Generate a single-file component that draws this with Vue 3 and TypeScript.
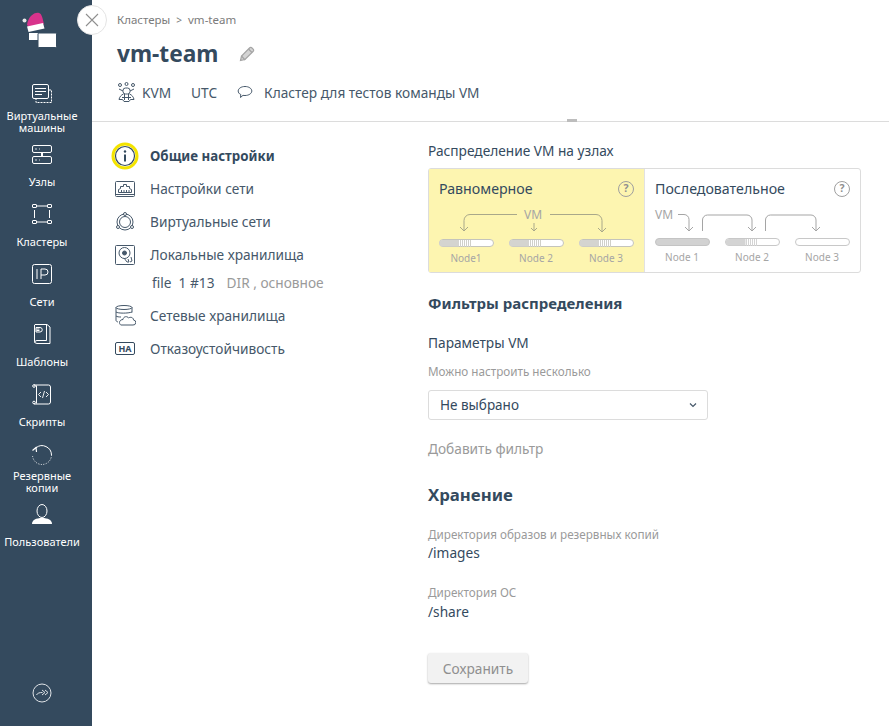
<script setup lang="ts">
const sideItems = [
  { id: 'vm', label: ['Виртуальные', 'машины'] },
  { id: 'nodes', label: ['Узлы'] },
  { id: 'clusters', label: ['Кластеры'] },
  { id: 'ip', label: ['Сети'] },
  { id: 'tpl', label: ['Шаблоны'] },
  { id: 'script', label: ['Скрипты'] },
  { id: 'backup', label: ['Резервные', 'копии'] },
  { id: 'users', label: ['Пользователи'] },
]
const evenBars = [439, 509, 579]
const hatch = [0, 2, 4, 6, 8, 10]
</script>

<template>
  <div class="page">
    <aside class="side">
      <div class="logo">
        <svg width="40" height="50" viewBox="20 10 40 50">
          <path d="M27 25 C28 17 34 12 39 13 C42 13.500 43 20 44 24 L30 28 Z" fill="#d8338c" />
          <circle cx="24.500" cy="20.500" r="2" fill="#e8e8e8" />
          <path d="M27 26.500 L43 23 L44.500 28.500 L28.500 32 Z" fill="#fff" />
          <rect x="29" y="33" width="14" height="7" fill="#fff" />
          <rect x="38" y="33" width="18.500" height="14.500" rx="1" fill="#fff" stroke="#344a5e" />
        </svg>
      </div>
      <nav class="side-nav">
        <a v-for="item in sideItems" :key="item.id" class="side-item">
          <span class="side-icon">
            <svg v-if="item.id === 'vm'" width="24" height="24" viewBox="30 82 24 24" fill="none" stroke="#fff" stroke-width="1">
              <rect x="32.500" y="84.500" width="16" height="14" rx="1.500" />
              <path d="M35 88.500h11M35 91.500h11M35 94.500h7" />
              <path d="M49 90h2.500v12.500H36V99" stroke-dasharray="2 1" />
            </svg>
            <svg v-else-if="item.id === 'nodes'" width="24" height="24" viewBox="30 142 24 24" fill="none" stroke="#fff" stroke-width="1">
              <rect x="32.500" y="145.500" width="19" height="7" rx="1.500" />
              <rect x="32.500" y="156.500" width="19" height="7" rx="1.500" />
              <path d="M42 152.500v4" stroke-width="2" />
              <path d="M35 149h2M39 149h1M35 160h2M39 160h1" stroke="#cfd6dc" />
            </svg>
            <svg v-else-if="item.id === 'clusters'" width="24" height="24" viewBox="30 202 24 24" fill="none" stroke="#fff" stroke-width="1">
              <rect x="32.500" y="204.500" width="4" height="3" rx=".5" />
              <rect x="47.500" y="204.500" width="4" height="3" rx=".5" />
              <rect x="32.500" y="220.500" width="4" height="3" rx=".5" />
              <rect x="47.500" y="220.500" width="4" height="3" rx=".5" />
              <path d="M37 206h10M37 222h10M34.500 210v8M49.500 210v8" />
            </svg>
            <svg v-else-if="item.id === 'ip'" width="24" height="24" viewBox="30 262 24 24" fill="none" stroke="#fff" stroke-width="1">
              <rect x="32.500" y="264.500" width="19" height="19" rx="2" />
              <path d="M37 269v10" />
              <path d="M41 279v-10h4a2.800 2.800 0 0 1 0 6h-4" />
            </svg>
            <svg v-else-if="item.id === 'tpl'" width="24" height="24" viewBox="30 322 24 24" fill="none" stroke="#fff" stroke-width="1">
              <path d="M35 324.500h12l3 2.500v16.500H37a2.500 2.500 0 0 1-2.500-2.500v-16z" />
              <path d="M46.500 324.500v16H37a2.500 2.500 0 0 0-2.500 2" />
              <path d="M36 327.500h4a2 2 0 0 1 0 4.500h-4z" />
              <path d="M36.500 329h3M36.500 330.500h3" />
            </svg>
            <svg v-else-if="item.id === 'script'" width="24" height="24" viewBox="30 382 24 24" fill="none" stroke="#fff" stroke-width="1">
              <path d="M34 385h14.500a2 2 0 0 1 2 2v15a2 2 0 0 1-2 2H34" />
              <path d="M36.500 385.500v18" />
              <circle cx="34" cy="386" r="1.300" />
              <circle cx="34" cy="402.500" r="1.300" />
              <path d="M41 392l-2.500 2.500 2.500 2.500M46 392l2.500 2.500-2.500 2.500M44.500 391l-2 7" stroke-width=".9" />
            </svg>
            <svg v-else-if="item.id === 'backup'" width="24" height="24" viewBox="30 442 24 24" fill="none" stroke="#fff" stroke-width="1">
              <path d="M36 447.800a9.500 9.500 0 0 1 15.500 7.200" />
              <path d="M51.500 455a9.500 9.500 0 0 1-19 0" stroke-dasharray="1 1.500" />
              <path d="M32.500 450.500l3.500-3 .5 4.500" stroke-width="1.200" />
            </svg>
            <svg v-else width="24" height="24" viewBox="30 502 24 24">
              <ellipse cx="42" cy="511" rx="5" ry="6.500" fill="none" stroke="#fff" />
              <path d="M32 524c0-4 4-6 10-6s10 2 10 6z" fill="#fff" />
            </svg>
          </span>
          <span class="side-label"><span v-for="l in item.label" :key="l">{{ l }}</span></span>
        </a>
      </nav>
      <div class="side-foot">
        <svg width="20" height="20" viewBox="0 0 20 20" fill="none" stroke="#dfe3e7" stroke-width="1">
          <circle cx="10" cy="10" r="9" />
          <path d="M4.500 12c1-2 3-2.500 6-2.500" />
          <path d="M10 7l3 2.500-3 2.500M13 7l3 2.500-3 2.500" />
        </svg>
      </div>
    </aside>

    <button class="close" aria-label="Закрыть">
      <svg width="14" height="14" viewBox="0 0 14 14" stroke="#8f8f8f" stroke-width="1.100" fill="none">
        <path d="M1 1l12 12M13 1L1 13" />
      </svg>
    </button>

    <main class="main">
      <header class="head">
        <div class="crumbs">Кластеры<span class="gt">&gt;</span>vm-team</div>
        <div class="title-row">
          <h1>vm-team</h1>
          <svg width="16" height="16" viewBox="0 0 16 16" fill="none" stroke="#a5a5a5" stroke-width="1.200">
            <path d="M1.500 14.500l1-4.500 8-8a1.500 1.500 0 0 1 2.500 0l1 1a1.500 1.500 0 0 1 0 2.500l-8 8z" fill="#d4d4d4" />
            <path d="M9.500 3l3.500 3.500M2.500 10l3.500 4" />
          </svg>
        </div>
        <div class="meta">
          <svg class="kvm" width="19" height="20" viewBox="0 0 19 20" fill="none" stroke="#46586a" stroke-width="1">
            <circle cx="3" cy="3" r="1.500" /><circle cx="9.500" cy="2" r="1.500" /><circle cx="16" cy="3" r="1.500" />
            <rect x="6" y="6" width="7" height="6" rx="2.500" />
            <path d="M6 9L2 7M13 9l4-2M6.500 12C4 13 2.500 15 2 17.500h3.500L7 19.500h5l1.500-2H17c-.5-2.500-2-4.500-4.500-5.500" />
            <path d="M7.500 12v6M11.500 12v6M5 15.500h9" />
          </svg>
          <span class="kv">KVM</span>
          <span class="utc">UTC</span>
          <svg class="bubble" width="16" height="14" viewBox="0 0 16 14" fill="none" stroke="#46586a" stroke-width="1">
            <path d="M8 1.500c3.800 0 6.800 2 6.800 4.500s-3 4.500-6.800 4.500c-.7 0-1.300 0-2-.2L3.500 12.500l.3-3C2 8.800 1.200 7.500 1.200 6c0-2.500 3-4.500 6.800-4.500z" />
          </svg>
          <span>Кластер для тестов команды VM</span>
        </div>
        <i class="tick"></i>
      </header>

      <div class="body">
        <ul class="menu">
          <li class="menu-row active">
            <span class="menu-icon">
              <svg width="28" height="28" viewBox="0 0 28 28" fill="none">
                <circle cx="14" cy="14" r="12" stroke="#f4e400" stroke-width="3" fill="#fff" />
                <circle cx="14" cy="14" r="9.500" stroke="#344a5e" stroke-width="1.200" />
                <circle cx="14" cy="9.500" r="1.200" fill="#344a5e" />
                <path d="M14 12.500v7" stroke="#344a5e" stroke-width="2" />
              </svg>
            </span>
            Общие настройки
          </li>
          <li class="menu-row">
            <span class="menu-icon">
              <svg width="22" height="18" viewBox="0 0 22 18" fill="none" stroke="#46586a" stroke-width="1">
                <rect x="1.500" y="1.500" width="19" height="15" rx="1" />
                <path d="M1.500 14.500h19" />
                <path d="M4.500 12.500v-3l2-1v-2h3v-2h3v2h3v2l2 1v3z" />
                <path d="M7.500 10v2.500M10 10v2.500M12.500 10v2.500M15 10v2.500" />
              </svg>
            </span>
            Настройки сети
          </li>
          <li class="menu-row">
            <span class="menu-icon">
              <svg width="20" height="20" viewBox="0 0 20 20" fill="none" stroke="#46586a" stroke-width="1">
                <circle cx="10" cy="10" r="8" />
                <circle cx="10" cy="10" r="5.500" />
                <circle cx="10" cy="2" r="1.500" fill="#fff" />
                <circle cx="3" cy="15" r="1.500" fill="#fff" />
                <circle cx="17" cy="15" r="1.500" fill="#fff" />
              </svg>
            </span>
            Виртуальные сети
          </li>
          <li class="menu-row">
            <span class="menu-icon">
              <svg width="20" height="20" viewBox="0 0 20 20" fill="none" stroke="#46586a" stroke-width="1">
                <rect x=".5" y=".5" width="19" height="19" rx="1" />
                <circle cx="9.500" cy="8" r="5.500" />
                <circle cx="9.500" cy="8" r="2" fill="#46586a" />
                <path d="M9 13l3 4 2 0-1-3M16 12l1 4-2 1" />
              </svg>
            </span>
            Локальные хранилища
          </li>
          <li class="sub-row">
            <span class="sub-name">file&nbsp; 1 #13</span>
            <span class="sub-note">DIR , основное</span>
          </li>
          <li class="menu-row">
            <span class="menu-icon">
              <svg width="21" height="21" viewBox="0 0 21 21" fill="none" stroke="#46586a" stroke-width="1">
                <ellipse cx="9" cy="2.500" rx="8" ry="2" />
                <path d="M1 2.500v13c0 .7 1 1.200 2 1.500M17 2.500v5M1 7c2 1.500 12 1.500 16 0M1 11c1 .8 3 1 5 1" />
                <path d="M6 20h12a2.500 2.500 0 0 0 .5-5c0-2.500-3-3.500-5-2-1-2-5-2-5.500 1.500-1.500 0-3.500 1-3.500 3 0 1.500 1 2.500 1.500 2.500z" fill="#fff" />
              </svg>
            </span>
            Сетевые хранилища
          </li>
          <li class="menu-row">
            <span class="menu-icon">
              <span class="ha">HA</span>
            </span>
            Отказоустойчивость
          </li>
        </ul>

        <section class="form">
          <div class="form-label">Распределение VM на узлах</div>
          <div class="cards">
            <div class="card card-on">
              <div class="card-head">
                <span>Равномерное</span>
                <span class="help">?</span>
              </div>
              <svg class="diagram" width="215" height="62" viewBox="429 207 215 62" fill="none">
                <path d="M517 214.500H470a6 6 0 0 0-6 6v10" stroke="#a9a88a" />
                <path d="M460 227l4 4 4-4" stroke="#a9a88a" />
                <path d="M550 214.500h46a6 6 0 0 1 6 6v11" stroke="#a9a88a" />
                <path d="M598 228l4 4 4-4" stroke="#a9a88a" />
                <path d="M534 223v8M531 228l3 3 3-3" stroke="#a9a88a" />
                <text x="533" y="219" class="dia-vm" text-anchor="middle">VM</text>
                <g v-for="(x, i) in evenBars" :key="x">
                  <rect :x="x + .5" y="239.500" width="54" height="7" rx="3.500" fill="#fff" stroke="#c4c4bc" />
                  <path :d="`M${x + 3.500} 240h16.500v6.500H${x + 3.500}a3 3 0 0 1 0-6.500z`" fill="#d4d4d0" />
                  <path v-for="h in hatch" :key="h" :d="`M${x + 21 + h}.5 240v7`" stroke="#d0d0ca" />
                  <text :x="x + 27" y="262" class="dia-node" text-anchor="middle">{{ i === 0 ? 'Node1' : i === 1 ? 'Node 2' : 'Node 3' }}</text>
                </g>
              </svg>
            </div>
            <div class="card">
              <div class="card-head">
                <span>Последовательное</span>
                <span class="help">?</span>
              </div>
              <svg class="diagram" width="216" height="62" viewBox="645 207 216 62" fill="none">
                <text x="655" y="219" class="dia-vm">VM</text>
                <path d="M678 214.500h6a5 5 0 0 1 5 5v11" stroke="#a5a5a5" />
                <path d="M685 227l4 4 4-4" stroke="#a5a5a5" />
                <path d="M702.500 231v-11a5 5 0 0 1 5-5H747a5 5 0 0 1 5 5v10" stroke="#a5a5a5" />
                <path d="M748 227l4 4 4-4" stroke="#a5a5a5" />
                <path d="M765.500 231v-11a5 5 0 0 1 5-5H811a5 5 0 0 1 5 5v10" stroke="#a5a5a5" />
                <path d="M812 227l4 4 4-4" stroke="#a5a5a5" />
                <rect x="655.500" y="238.500" width="54" height="7" rx="3.500" fill="#d2d2d2" stroke="#c4c4c4" />
                <rect x="725.500" y="238.500" width="54" height="7" rx="3.500" fill="#fff" stroke="#c8c8c8" />
                <path d="M729 239h16.500v6.500H729a3 3 0 0 1 0-6.500z" fill="#d4d4d4" />
                <path v-for="h in hatch" :key="h" :d="`M${746 + h}.5 239v7`" stroke="#d4d4d4" />
                <rect x="795.500" y="238.500" width="54" height="7" rx="3.500" fill="#fff" stroke="#c8c8c8" />
                <text x="682" y="261" class="dia-node" text-anchor="middle">Node 1</text>
                <text x="752" y="261" class="dia-node" text-anchor="middle">Node 2</text>
                <text x="822" y="261" class="dia-node" text-anchor="middle">Node 3</text>
              </svg>
            </div>
          </div>

          <h2 class="h-filter">Фильтры распределения</h2>
          <div class="form-label params">Параметры VM</div>
          <div class="hint">Можно настроить несколько</div>
          <div class="select">
            <span>Не выбрано</span>
            <svg width="8" height="6" viewBox="0 0 8 6" fill="none" stroke="#46586a" stroke-width="1.200">
              <path d="M1 1.500l3 3 3-3" />
            </svg>
          </div>
          <div class="add">Добавить фильтр</div>

          <h2 class="h-store">Хранение</h2>
          <div class="field first">
            <div class="hint">Директория образов и резервных копий</div>
            <div class="value">/images</div>
          </div>
          <div class="field">
            <div class="hint">Директория ОС</div>
            <div class="value">/share</div>
          </div>
          <button class="save">Сохранить</button>
        </section>
      </div>
    </main>
  </div>
</template>

<style>
html, body { margin: 0; background: #fff; }
</style>

<style scoped>
.page {
  position: relative;
  display: flex;
  width: 889px;
  height: 726px;
  overflow: hidden;
  font-family: "Noto Sans", "Open Sans", sans-serif;
  color: #344a5e;
  font-size: 13.700px;
}
.side {
  width: 92px;
  flex: none;
  background: #344a5e;
  display: flex;
  flex-direction: column;
  color: #fff;
}
.logo {
  height: 82px;
  padding: 10px 0 0 20px;
  box-sizing: border-box;
}
.logo svg { display: block; }
.side-nav { display: flex; flex-direction: column; width: 84px; }
.side-item {
  height: 60px;
  display: flex;
  flex-direction: column;
  align-items: center;
}
.side-icon { height: 24px; display: block; }
.side-icon svg { display: block; }
.side-label {
  height: 26px;
  margin-top: 3px;
  display: flex;
  flex-direction: column;
  justify-content: center;
  align-items: center;
  font-size: 11px;
  line-height: 12px;
  white-space: nowrap;
}
.side-label span { height: 12px; }
.side-foot {
  margin-top: auto;
  padding: 0 0 23px 32px;
}
.side-foot svg { display: block; }
.close {
  position: absolute;
  left: 77px;
  top: 5px;
  width: 30px;
  height: 30px;
  border-radius: 50%;
  border: 1px solid #e4e4e4;
  background: #fff;
  padding: 0;
  display: flex;
  align-items: center;
  justify-content: center;
  box-sizing: border-box;
}
.main { flex: 1; min-width: 0; display: flex; flex-direction: column; }
.head {
  position: relative;
  height: 122px;
  box-sizing: border-box;
  border-bottom: 1px solid #dcdcdc;
  padding: 12px 0 0 25px;
}
.crumbs { font-size: 11.500px; line-height: 16px; color: #7b7b7b; }
.gt { margin: 0 6px; font-size: 10px; }
.title-row {
  display: flex;
  align-items: center;
  gap: 21px;
  margin-top: 9px;
  height: 34px;
}
h1 { margin: 0; font-size: 22.700px; line-height: 34px; font-weight: 700; color: #344a5e; }
.meta {
  display: flex;
  align-items: center;
  margin-top: 10px;
  height: 22px;
  color: #46586a;
}
.kvm { margin-right: 6px; }
.kv { margin-right: 20px; }
.utc { margin-right: 20px; }
.bubble { margin-right: 11px; }
.tick {
  position: absolute;
  left: 475px;
  bottom: -1px;
  width: 10px;
  height: 3px;
  background: #bdbdbd;
}
.body { display: flex; flex: 1; min-height: 0; }
.menu {
  list-style: none;
  margin: 0;
  padding: 17px 0 0 19px;
  width: 336px;
  box-sizing: border-box;
  flex: none;
}
.menu-row {
  height: 33px;
  display: flex;
  align-items: center;
  color: #46586a;
}
.menu-row.active { font-weight: 700; font-size: 13.300px; color: #344a5e; }
.menu-icon {
  width: 28px;
  margin-right: 11px;
  flex: none;
  display: flex;
  justify-content: center;
}
.menu-icon svg { display: block; }
.ha {
  border: 1px solid #344a5e;
  border-radius: 2px;
  width: 18px;
  height: 11px;
  font-size: 9px;
  font-weight: 700;
  line-height: 11px;
  text-align: center;
  color: #344a5e;
}
.sub-row {
  height: 23px;
  margin-bottom: 5px;
  padding-left: 41px;
  display: flex;
  align-items: center;
  gap: 12px;
  color: #46586a;
}
.sub-note { color: #9a9a9a; }
.form { width: 433px; padding-top: 19px; }
.form-label { line-height: 19px; color: #344a5e; }
.cards {
  display: flex;
  margin-top: 8px;
  height: 105px;
  box-sizing: border-box;
  border: 1px solid #dcdcdc;
  border-radius: 3px;
}
.card { position: relative; flex: 1; padding: 9px 0 0 10px; box-sizing: border-box; color: #344a5e; }
.card-on { background: #fdf5b0; border-right: 1px solid #e2e2e2; }
.card-head {
  display: flex;
  justify-content: space-between;
  align-items: center;
  height: 20px;
  padding-right: 10px;
  font-size: 14.200px;
}
.help {
  width: 16px;
  height: 16px;
  margin-top: 2px;
  box-sizing: border-box;
  border: 1.500px solid #9f9f9f;
  border-radius: 50%;
  color: #8f8f8f;
  font-size: 10.500px;
  font-weight: 700;
  line-height: 13px;
  text-align: center;
}
.diagram { position: absolute; left: 0; top: 38px; display: block; }
.dia-vm { font-size: 12px; fill: #a5a5a5; font-family: "Noto Sans", sans-serif; }
.dia-node { font-size: 10px; fill: #a5a5a5; font-family: "Noto Sans", sans-serif; }
h2 { margin: 0; font-weight: 700; color: #344a5e; }
.h-filter { font-size: 15px; line-height: 20px; margin-top: 20px; }
.params { margin-top: 20px; }
.hint { font-size: 11.700px; line-height: 16px; color: #9a9a9a; }
.params + .hint { margin-top: 11px; }
.select {
  margin-top: 11px;
  width: 280px;
  height: 30px;
  box-sizing: border-box;
  border: 1px solid #dcdcdc;
  border-radius: 3px;
  display: flex;
  align-items: center;
  justify-content: space-between;
  padding: 0 10px 0 11px;
  font-size: 13.500px;
  color: #344a5e;
}
.add { margin-top: 19px; line-height: 20px; color: #9a9a9a; }
.h-store { font-size: 16.800px; line-height: 22px; margin-top: 25px; }
.field { margin-top: 21px; }
.field.first { margin-top: 20px; }
.value { line-height: 20px; margin-top: 2px; color: #344a5e; }
.field.first .value { margin-top: 1px; }
.save {
  display: block;
  margin-top: 31px;
  width: 100px;
  height: 30px;
  border: 0;
  border-radius: 3px;
  background: #f2f2f2;
  box-shadow: 0 1px 2px rgba(0, 0, 0, .35);
  color: #8f8f8f;
  font: 13.700px "Noto Sans", sans-serif;
}
</style>
